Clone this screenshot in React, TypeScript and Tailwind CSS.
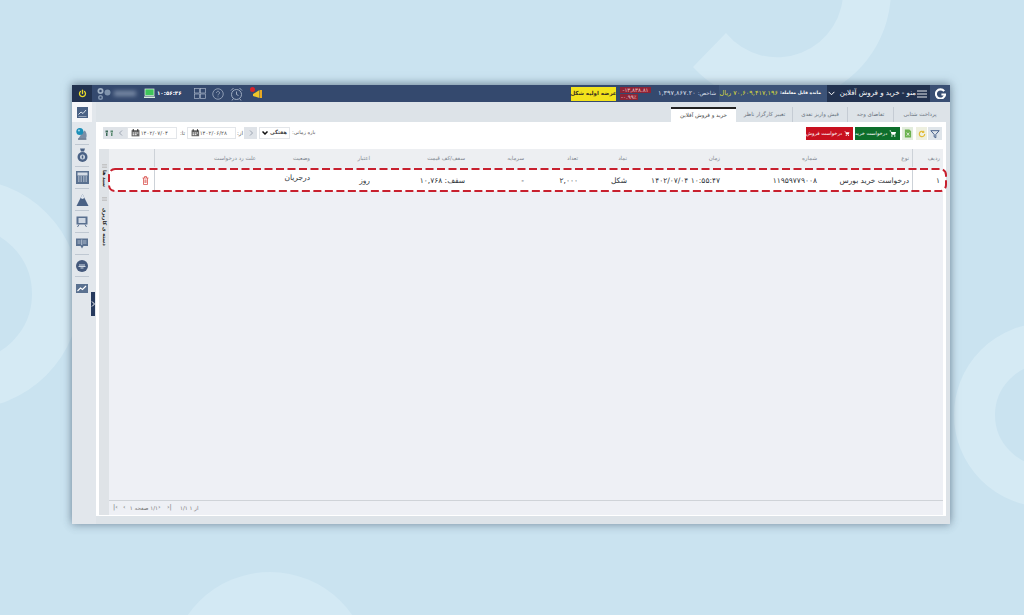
import React from "react";

const font = "font-['DejaVu_Sans','Noto_Sans',sans-serif]";

function Background() {
  return (
    <svg className="absolute inset-0" width="1024" height="615" viewBox="0 0 1024 615" fill="none">
      <circle cx="-35" cy="294" r="91" stroke="#d5eaf4" strokeWidth="48" />
      <circle cx="1046" cy="415" r="71.5" stroke="#d5eaf4" strokeWidth="41" />
      <circle cx="270" cy="672" r="100" fill="#d3e9f4" />
      <path d="M891 -13 A114 114 0 0 1 693 67 L726 33 A66 66 0 0 0 843 -13 Z" fill="#d5eaf4" />
    </svg>
  );
}

function IconBtn({ className, children }: { className: string; children: React.ReactNode }) {
  return <div className={`flex items-center justify-center shrink-0 ${className}`}>{children}</div>;
}

function Cart() {
  return (
    <svg width="9" height="9" viewBox="0 0 24 24" fill="#fff">
      <path d="M2 3h4l1 4h15l-3 9H8L5 5H2z" />
      <circle cx="9" cy="20" r="2.4" />
      <circle cx="18" cy="20" r="2.4" />
    </svg>
  );
}

function Cal() {
  return (
    <svg width="9" height="8" viewBox="0 0 16 14">
      <rect x="1" y="2" width="14" height="11" fill="#666" />
      <rect x="3" y="0" width="2" height="4" fill="#333" />
      <rect x="11" y="0" width="2" height="4" fill="#333" />
      <rect x="3" y="6" width="3" height="2" fill="#eee" />
      <rect x="7" y="6" width="3" height="2" fill="#eee" />
      <rect x="11" y="6" width="2" height="2" fill="#eee" />
      <rect x="3" y="9" width="3" height="2" fill="#eee" />
      <rect x="7" y="9" width="3" height="2" fill="#eee" />
    </svg>
  );
}

function Header() {
  return (
    <div className="h-[17px] bg-[#34496e] flex items-center shrink-0 text-white">
      <div className="w-[20px] h-full bg-[#22324f] flex items-center justify-center">
        <svg width="9" height="9" viewBox="0 0 24 24" fill="none" stroke="#e8d92a" strokeWidth="3.5" strokeLinecap="round">
          <path d="M12 3v9" />
          <path d="M6.5 6.5a8 8 0 1 0 11 0" />
        </svg>
      </div>
      <div className="w-[4px]" />
      <svg width="15" height="14" viewBox="0 0 30 28" fill="#9fb0c4">
        <circle cx="9" cy="8" r="6" />
        <circle cx="9" cy="8" r="2.5" fill="#34496e" />
        <circle cx="9" cy="21" r="5" fill="#7f93ad" />
        <circle cx="9" cy="21" r="2" fill="#34496e" />
        <circle cx="23" cy="11" r="6" fill="#7f93ad" />
      </svg>
      <div className="w-[22px] h-[5px] ml-[3px] bg-[#7d8ea8] blur-[2px]" />
      <div className="w-[8px]" />
      <svg width="11" height="11" viewBox="0 0 22 22" className="shrink-0">
        <rect x="2" y="2" width="18" height="13" fill="#3fc45a" stroke="#d8f0dc" strokeWidth="1.5" />
        <rect x="0" y="17" width="22" height="3" fill="#d8f0dc" />
      </svg>
      <span className={`${font} text-[5.5px] font-bold ml-[2px] w-[27px] whitespace-nowrap`}>۱۰:۵۶:۳۶</span>
      <div className="w-[10px]" />
      <svg width="12" height="11" viewBox="0 0 24 22" fill="none" stroke="#a9b6c8" strokeWidth="1.4">
        <rect x="1" y="1" width="10" height="9" />
        <rect x="13" y="1" width="10" height="9" />
        <rect x="1" y="12" width="10" height="9" />
        <rect x="13" y="12" width="10" height="9" />
      </svg>
      <div className="w-[6px]" />
      <svg width="12" height="12" viewBox="0 0 24 24" fill="none" stroke="#a9b6c8" strokeWidth="1.5">
        <circle cx="12" cy="12" r="10.5" />
        <path d="M9 9.5a3 3 0 1 1 4.5 2.6c-1 .6-1.5 1.2-1.5 2.6" />
        <path d="M12 17v1.5" />
      </svg>
      <div className="w-[6px]" />
      <svg width="13" height="14" viewBox="0 0 26 28" fill="none" stroke="#a9b6c8" strokeWidth="1.8">
        <circle cx="13" cy="15" r="10" />
        <path d="M13 9v6l4 2" />
        <path d="M2 7l5-5M24 7l-5-5" />
        <path d="M6 24l-2 3M20 24l2 3" />
      </svg>
      <div className="w-[7px]" />
      <div className="relative w-[13px] h-[13px]">
        <svg width="11" height="10" viewBox="0 0 22 20" className="absolute right-0 bottom-[1px]">
          <path d="M2 10 L15 2 V18 L2 14 Z" fill="#eec62a" />
          <rect x="16" y="2" width="4" height="16" fill="#e8a822" />
        </svg>
        <span className="absolute left-0 top-0 w-[5px] h-[5px] rounded-full bg-[#d8232a]" />
      </div>
      <div className="flex-1" />
      <div className={`${font} text-[5.5px] font-bold h-[14px] w-[45px] bg-[#f2e21c] text-[#3a3320] flex items-center justify-center whitespace-nowrap`} dir="rtl">
        عرضه اولیه شکل
      </div>
      <div className={`${font} w-[31px] ml-[4px] text-[5.5px] text-[#f6c8cc] flex flex-col items-end gap-[1px] leading-[6px]`}>
        <span className="bg-[#8c2436] px-[1px] self-stretch text-center whitespace-nowrap">-۱۳,۸۳۸.۸۱</span>
        <span className="bg-[#8c2436] px-[1px] self-start whitespace-nowrap">-۰.۹۹٪</span>
      </div>
      <div className="w-[3px]" />
      <div className={`${font} text-[6.5px] w-[62px] text-[#d5dde8] whitespace-nowrap`} dir="rtl">
        <span className="text-[5.5px]">شاخص:</span> ۱,۳۹۷,۸۶۷.۲۰
      </div>
      <div className="w-[3px]" />
      <div className={`${font} h-full bg-[#3c5378] w-[108px] flex items-center pr-[6px] text-[6.5px] whitespace-nowrap`} dir="rtl">
        <span className="text-[4.5px] font-bold">مانده قابل معامله:</span>
        <span className="text-[#d9d93a] mr-[2px]">۷۰,۶۰۹,۴۱۷,۱۹۶ ریال</span>
      </div>
      <div className="h-full w-[103px] bg-[#22324f] flex items-center" dir="rtl">
        <svg width="10" height="8" viewBox="0 0 20 16" fill="none" stroke="#fff" strokeWidth="1.8" className="mr-[3px] shrink-0">
          <path d="M0 2h20M0 8h20M0 14h20" />
        </svg>
        <span className={`${font} text-[7px] mr-[1px] whitespace-nowrap`}>منو - خرید و فروش آفلاین</span>
        <svg width="7" height="5" viewBox="0 0 16 12" fill="none" stroke="#fff" strokeWidth="2.4" className="mr-[5px] shrink-0">
          <path d="M1 2l7 7 7-7" />
        </svg>
      </div>
      <div className="w-[20px] h-full bg-[#3a4f73] flex items-center justify-center">
        <svg width="11" height="11" viewBox="0 0 24 24" fill="none" stroke="#fff" strokeWidth="4.5">
          <path d="M20 7a10 10 0 1 0 2 7h-8" />
        </svg>
      </div>
    </div>
  );
}

function Sidebar() {
  const icons = [
    <svg width="16" height="16" viewBox="0 0 32 32">
      <path d="M22 8c5 4 6 14 3 18H8c3-4 8-14 14-18z" fill="#7a8ea6" />
      <rect x="7" y="26" width="19" height="3" fill="#50647e" />
      <circle cx="11" cy="10" r="8" fill="#1c8fb8" />
      <circle cx="9" cy="8" r="2.5" fill="#9ad6ea" />
    </svg>,
    <svg width="11" height="15" viewBox="0 0 22 30">
      <path d="M6 1h10l-2 6H8z" fill="#4a6285" />
      <circle cx="11" cy="18" r="10" fill="#4a6285" />
      <circle cx="11" cy="18" r="5" fill="#cfd8e3" />
      <rect x="9.5" y="15" width="3" height="6" fill="#4a6285" />
    </svg>,
    <svg width="13" height="13" viewBox="0 0 26 26">
      <rect width="26" height="26" fill="#5a7190" />
      <rect x="3" y="3" width="20" height="6" fill="#d5dde6" />
      <path d="M4 12h18M4 16h18M4 20h18" stroke="#d5dde6" strokeDasharray="3 2" strokeWidth="2" />
    </svg>,
    <svg width="13" height="14" viewBox="0 0 26 28">
      <path d="M13 2l12 24H1z" fill="#4a6285" />
      <path d="M13 2l4 8-4 2-4-2z" fill="#dfe6ee" />
    </svg>,
    <svg width="12" height="11" viewBox="0 0 24 22">
      <rect x="1" y="1" width="22" height="16" fill="#5a7190" />
      <rect x="5" y="4" width="14" height="10" fill="#cfd8e3" />
      <path d="M6 17l-3 5M18 17l3 5" stroke="#5a7190" strokeWidth="2" />
    </svg>,
    <svg width="12" height="11" viewBox="0 0 24 22">
      <path d="M0 1h24v15H15l-3 5-3-5H0z" fill="#5a7190" />
      <path d="M11.5 3v11" stroke="#e6edf5" strokeWidth="1.4" />
      <path d="M3 6h6M3 10h6M14 6h7M14 10h7" stroke="#e6edf5" strokeWidth="1.2" />
    </svg>,
    <svg width="12" height="12" viewBox="0 0 24 24">
      <circle cx="12" cy="12" r="12" fill="#44597c" />
      <path d="M5 13h14M6 10h12M9 16h6" stroke="#dfe6ee" strokeWidth="1.8" />
    </svg>,
    <svg width="12" height="9" viewBox="0 0 24 18">
      <rect width="24" height="18" fill="#5a7190" />
      <path d="M3 14l6-6 4 3 7-7" fill="none" stroke="#fff" strokeWidth="2.2" />
    </svg>,
  ];
  return (
    <div className="w-[24px] bg-[#e2e7ec] shrink-0 flex flex-col items-center pr-[4px] relative">
      <div className="w-[20px] h-[20px] bg-[#f6f7f9] flex items-center justify-center shrink-0">
        <svg width="11" height="11" viewBox="0 0 22 22">
          <rect width="22" height="22" fill="#4a6285" />
          <path d="M3 15l5-5 4 3 6-7" fill="none" stroke="#e6edf5" strokeWidth="1.8" />
          <path d="M3 19h16" stroke="#e6edf5" />
        </svg>
      </div>
      <div className="h-[1px] shrink-0" />
      {icons.map((ic, i) => (
        <div key={i} className={`w-[14px] h-[22px] shrink-0 flex items-center justify-center ${i < icons.length - 1 ? "border-b border-[#bfc8d2]" : ""}`}>
          {ic}
        </div>
      ))}
      <div className="absolute right-[1px] top-[190px] w-[4.5px] h-[24px] bg-[#263a5e] flex items-center justify-center">
        <svg width="4" height="6" viewBox="0 0 8 12" fill="none" stroke="#fff" strokeWidth="2">
          <path d="M2 1l5 5-5 5" />
        </svg>
      </div>
    </div>
  );
}

function Tabs() {
  const tab = "h-[15px] flex items-center justify-center whitespace-nowrap border-l border-[#c5ccd4]";
  return (
    <div className={`${font} h-[20px] shrink-0 flex items-end text-[5.5px] text-[#6a7480]`} dir="rtl">
      <div className={`${tab} w-[53px]`}>پرداخت شتابی</div>
      <div className={`${tab} w-[46px]`}>تقاضای وجه</div>
      <div className={`${tab} w-[55px]`}>فیش واریز نقدی</div>
      <div className={`${tab} w-[55px] border-l-0`}>تغییر کارگزار ناظر</div>
      <div className="h-[15px] w-[65px] mr-[1px] bg-white border-t-2 border-[#222] flex items-center justify-center whitespace-nowrap text-[#444]">
        خرید و فروش آفلاین
      </div>
    </div>
  );
}

function Toolbar() {
  return (
    <div className={`${font} h-[27px] shrink-0 flex items-start pt-[5px] pl-[7px] pr-[4px] justify-between`} dir="rtl">
      <div className="flex items-center h-[13px]">
        <IconBtn className="w-[14px] h-[13px] bg-[#dfe5ea]">
          <svg width="10" height="10" viewBox="0 0 24 24" fill="none" stroke="#3f5a85" strokeWidth="2.2">
            <path d="M2 4h20l-8 9v8l-4-2v-6z" />
          </svg>
        </IconBtn>
        <IconBtn className="w-[11px] h-[13px] bg-[#eef0e0] mr-[1px]">
          <svg width="8" height="8" viewBox="0 0 24 24" fill="none" stroke="#e2bd3c" strokeWidth="3.6">
            <path d="M20 12a8 8 0 1 1-3-6.2" />
            <path d="M17 2v5h-5" />
          </svg>
        </IconBtn>
        <IconBtn className="w-[11px] h-[13px] bg-[#e2ecdc] mr-[3px]">
          <svg width="8" height="9" viewBox="0 0 18 20">
            <path d="M2 1h10l4 4v14H2z" fill="#6bb24e" />
            <path d="M6 8l6 7M12 8l-6 7" stroke="#fff" strokeWidth="1.6" />
          </svg>
        </IconBtn>
        <div className="w-[45px] h-[13px] mr-[2px] bg-[#0d6e2b] text-white text-[5px] flex items-center justify-start pr-[3px] gap-[2px] whitespace-nowrap">
          <Cart />
          <span>درخواست خرید</span>
        </div>
        <div className="w-[47px] h-[13px] mr-[2px] bg-[#c8101f] text-white text-[5px] flex items-center justify-start pr-[3px] gap-[2px] whitespace-nowrap">
          <Cart />
          <span>درخواست فروش</span>
        </div>
      </div>
      <div className="flex items-center h-[12px] text-[5.5px] text-[#555]">
        <span className="whitespace-nowrap text-[5px]">بازه زمانی:</span>
        <div className="w-[31px] h-[12px] mr-[2px] bg-white border border-[#e3e6ea] flex items-center justify-between px-[2px]">
          <span className="font-bold text-[5px] text-[#444] whitespace-nowrap">هفتگی</span>
          <svg width="6" height="4" viewBox="0 0 12 8" fill="none" stroke="#111" strokeWidth="3">
            <path d="M1 1l5 5 5-5" />
          </svg>
        </div>
        <IconBtn className="w-[13px] h-[12px] mr-[2px] bg-[#dfe3e8]">
          <svg width="4" height="6" viewBox="0 0 8 12" fill="none" stroke="#8a95a3" strokeWidth="1.6">
            <path d="M2 1l5 5-5 5" />
          </svg>
        </IconBtn>
        <span className="w-[8px] text-center">از:</span>
        <div className="w-[49px] h-[12px] bg-white border border-[#e3e6ea] flex items-center justify-between px-[3px]" dir="ltr">
          <Cal />
          <span className="text-[5.5px] text-[#555] mr-[5px] whitespace-nowrap">۱۴۰۲/۰۶/۲۸</span>
        </div>
        <span className="mr-[2px] w-[5px]">تا:</span>
        <div className="w-[50px] h-[12px] mr-[3px] bg-white border border-[#e3e6ea] flex items-center justify-between px-[3px]" dir="ltr">
          <Cal />
          <span className="text-[5.5px] text-[#555] mr-[5px] whitespace-nowrap">۱۴۰۲/۰۷/۰۴</span>
        </div>
        <IconBtn className="w-[12px] h-[12px] bg-[#dfe3e8]">
          <svg width="4" height="6" viewBox="0 0 8 12" fill="none" stroke="#8a95a3" strokeWidth="1.6">
            <path d="M6 1l-5 5 5 5" />
          </svg>
        </IconBtn>
        <IconBtn className="w-[12px] h-[12px] bg-[#dfe3e8]">
          <svg width="9" height="8" viewBox="0 0 18 16" fill="#3d6a58">
            <rect x="1" y="3" width="5" height="4" />
            <rect x="11" y="3" width="5" height="4" fill="#5a8a70" />
            <rect x="2" y="8" width="3" height="6" />
            <rect x="12" y="8" width="3" height="6" fill="#5a8a70" />
          </svg>
        </IconBtn>
      </div>
    </div>
  );
}

const COLS = "grid grid-cols-[31px_92px_97px_93px_49px_54px_59px_95px_60px_54px_105px_44px]";

function Table() {
  const heads = ["ردیف", "نوع", "شماره", "زمان", "نماد", "تعداد", "سرمایه", "سقف/کف قیمت", "اعتبار", "وضعیت", "علت رد درخواست", ""];
  const cells = ["۱", "درخواست خرید بورس", "۱۱۹۵۹۷۷۹۰۰۸", "۱۴۰۲/۰۷/۰۴ ۱۰:۵۵:۴۷", "شکل", "۲,۰۰۰", "-", "سقف: ۱۰,۷۶۸", "روز", "درجریان", "", ""];
  return (
    <div className={`${font} flex-1 flex pl-[3px] pr-[3px] pb-[1px] min-h-0`} dir="ltr">
      <div className="w-[10px] bg-[#dfe3e7] shrink-0 flex flex-col items-center text-[5px] text-[#222] font-bold">
        <div className="h-[19px] flex items-end">
          <svg width="5" height="4" viewBox="0 0 10 8" stroke="#bbb" strokeWidth="1.5">
            <path d="M0 1h10M0 4h10M0 7h10" />
          </svg>
        </div>
        <span className="[writing-mode:vertical-rl] h-[21px] text-center whitespace-nowrap">سبد ها</span>
        <div className="h-[19px] flex items-center">
          <svg width="5" height="4" viewBox="0 0 10 8" stroke="#bbb" strokeWidth="1.5">
            <path d="M0 1h10M0 4h10M0 7h10" />
          </svg>
        </div>
        <span className="[writing-mode:vertical-rl] whitespace-nowrap">دسته ی کاربری</span>
      </div>
      <div className="flex-1 bg-[#eef0f5] flex flex-col min-w-0" dir="rtl">
        <div className={`${COLS} h-[18px] bg-[#edeff2]`}>
          {heads.map((h, i) => (
            <div key={i} className={`flex items-center text-[5.5px] text-[#7f8791] pr-[3px] whitespace-nowrap ${i === 0 || i === 10 ? "border-l border-[#cdd2d8]" : ""}`}>
              {h}
            </div>
          ))}
        </div>
        <div className={`${COLS} h-[21px] bg-white mt-[3px]`}>
          {cells.map((c, i) => (
            <div key={i} className={`flex items-center text-[7.5px] text-[#2f3439] pr-[3px] whitespace-nowrap ${i === 0 || i === 10 ? "border-l border-[#cdd2d8]" : ""} ${i === 9 ? "pb-[5px]" : ""}`}>
              {i === 11 ? (
                <svg width="7" height="9" viewBox="0 0 14 18" fill="none" stroke="#d9534f" strokeWidth="1.6" className="mr-[2px]">
                  <path d="M1 4h12M5 4V1h4v3M3 4v13h8V4M6 7v7M8 7v7" />
                </svg>
              ) : i === 3 ? (
                <span dir="ltr">{c}</span>
              ) : (
                c
              )}
            </div>
          ))}
        </div>
        <div className="flex-1" />
        <div className="h-[15px] border-t border-[#cfd3d8] flex items-center text-[5.5px] text-[#777] pl-[4px] whitespace-nowrap" dir="ltr">
          <span className="w-[10px] text-[6.5px]">|‹</span>
          <span className="w-[7px] text-[6.5px]">‹</span>
          <span className="w-[28px]" dir="rtl">۱/۱ صفحه ۱</span>
          <span className="w-[9px] text-[6.5px]">›</span>
          <span className="w-[13px] text-[6.5px]">›|</span>
          <span>۱/۱ از ۱</span>
        </div>
      </div>
    </div>
  );
}

export default function App() {
  return (
    <div className="w-[1024px] h-[615px] bg-[#cae3f0] relative overflow-hidden flex items-start pt-[85px] pl-[72px]">
      <Background />
      <div className="relative w-[878px] h-[439px] bg-[#dde3e8] flex flex-col shadow-[0_-2px_8px_rgba(70,90,110,0.5),0_2px_8px_rgba(70,90,110,0.3)]">
        <Header />
        <div className="flex-1 flex min-h-0">
          <Sidebar />
          <div className="flex-1 flex flex-col pr-[4px] pb-[8px] min-w-0">
            <Tabs />
            <div className="flex-1 bg-white flex flex-col min-h-0">
              <Toolbar />
              <Table />
            </div>
          </div>
        </div>
        <svg className="absolute left-[36px] top-[83px]" width="839" height="24" viewBox="0 0 839 24" fill="none">
          <rect x="1" y="1" width="837" height="22" rx="6" stroke="#c8202e" strokeWidth="2" strokeDasharray="8 3.5" />
        </svg>
      </div>
    </div>
  );
}
